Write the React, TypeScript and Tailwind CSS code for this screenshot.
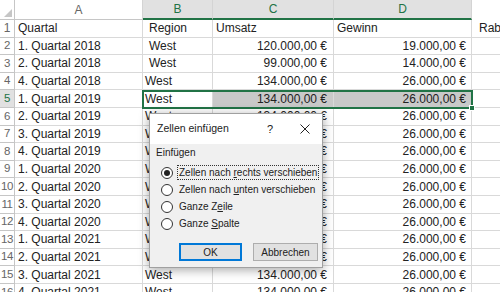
const quarters = [
  '1. Quartal 2018',
  '2. Quartal 2018',
  '4. Quartal 2018',
  '1. Quartal 2019',
  '2. Quartal 2019',
  '3. Quartal 2019',
  '4. Quartal 2019',
  '1. Quartal 2020',
  '2. Quartal 2020',
  '3. Quartal 2020',
  '4. Quartal 2020',
  '1. Quartal 2021',
  '2. Quartal 2021',
  '3. Quartal 2021',
  '4. Quartal 2021',
];

const umsatz = (i: number) => (i === 0 ? '120.000,00 €' : i === 1 ? '99.000,00 €' : '134.000,00 €');
const gewinn = (i: number) => (i === 0 ? '19.000,00 €' : i === 1 ? '14.000,00 €' : '26.000,00 €');

function ColHead({ label, w, active }: { label: string; w: string; active?: boolean }) {
  return (
    <div
      className={`${w} shrink-0 h-full flex items-center justify-center border-r border-[#d4d4d4] ${
        active
          ? 'bg-[#e1e1e1] text-[#217346] border-b-2 border-b-[#217346]'
          : 'text-[#666] border-b border-b-[#c6c6c6]'
      }`}
    >
      {label}
    </div>
  );
}

function Radio({ checked, children, focus }: { checked?: boolean; children: React.ReactNode; focus?: boolean }) {
  return (
    <div className="h-[17px] flex items-center pl-[11px]">
      <span className="w-[12px] h-[12px] rounded-full border border-[#333] bg-white flex items-center justify-center">
        {checked && <span className="w-[6px] h-[6px] rounded-full bg-[#222]" />}
      </span>
      <span
        className={`ml-[5px] px-[1px] leading-[13px] ${focus ? 'outline outline-1 outline-dotted outline-[#333]' : ''}`}
      >
        {children}
      </span>
    </div>
  );
}

function Dialog() {
  return (
    <div className="absolute left-[149px] top-[113px] w-[174px] h-[155px] border border-[#a0a0a0] bg-[#f0f0f0] shadow-[0_2px_10px_rgba(0,0,0,0.35)] text-[10px] text-[#222] flex flex-col">
      <div className="h-[30px] bg-white flex items-center pl-[7px] text-[10.5px] shrink-0">
        <span className="flex-1">Zellen einfügen</span>
        <span className="w-[20px] text-center text-[11px] mr-[20px]">?</span>
        <svg width="10" height="10" viewBox="0 0 10 10" className="mr-[12px]">
          <path d="M0.5 0.5 L9.5 9.5 M9.5 0.5 L0.5 9.5" stroke="#222" strokeWidth="1" />
        </svg>
      </div>
      <div className="pt-[2px] pl-[6px] leading-[14px]">Einfügen</div>
      <div className="mt-[4px] flex flex-col">
        <Radio checked focus>
          Zellen nach <u>r</u>echts verschieben
        </Radio>
        <Radio>
          Zellen nach <u>u</u>nten verschieben
        </Radio>
        <Radio>
          Ganze Z<u>e</u>ile
        </Radio>
        <Radio>
          Ganze <u>S</u>palte
        </Radio>
      </div>
      <div className="mt-[11px] flex justify-end gap-[11px] pr-[4px]">
        <div className="w-[63px] h-[18px] border-2 border-[#0078d7] bg-[#e1e1e1] flex items-center justify-center">OK</div>
        <div className="w-[65px] h-[18px] border border-[#adadad] bg-[#e1e1e1] flex items-center justify-center">Abbrechen</div>
      </div>
    </div>
  );
}

export default function App() {
  return (
    <div className="relative w-[500px] h-[292px] overflow-hidden bg-white font-['Liberation_Sans',Arial,sans-serif] text-[12px] text-[#222]">
      {/* column headers */}
      <div className="flex h-[20px]">
        <div className="w-[15px] shrink-0 h-full border-r border-b border-[#c6c6c6] flex items-end justify-end p-[2px]">
          <svg width="8" height="8" viewBox="0 0 8 8">
            <path d="M8 0 L8 8 L0 8 Z" fill="#c6c6c6" />
          </svg>
        </div>
        <ColHead label="A" w="w-[128px]" />
        <ColHead label="B" w="w-[70px]" active />
        <ColHead label="C" w="w-[121px]" active />
        <ColHead label="D" w="w-[138px]" active />
        <div className="flex-1 h-full" />
      </div>

      {/* row 1 */}
      <div className="flex h-[17.6px]">
        <div className="w-[15px] shrink-0 border-r border-b border-[#c6c6c6] text-[#666] flex items-center justify-center">1</div>
        <div className="w-[128px] shrink-0 border-r border-b border-[#d9d9d9] flex items-center pl-[3px]">Quartal</div>
        <div className="w-[70px] shrink-0 border-r border-b border-[#d9d9d9] flex items-center pl-[6px]">Region</div>
        <div className="w-[121px] shrink-0 border-r border-b border-[#d9d9d9] flex items-center pl-[3px]">Umsatz</div>
        <div className="w-[138px] shrink-0 border-r border-b border-[#d9d9d9] flex items-center pl-[3px]">Gewinn</div>
        <div className="flex-1 border-b border-[#d9d9d9] flex items-center pl-[7px] whitespace-nowrap">Rabatt</div>
      </div>

      {quarters.map((q, i) => {
        const selected = i === 3;
        return (
          <div key={q} className="flex h-[17.6px]">
            <div
              className={`w-[15px] shrink-0 border-r border-b border-[#c6c6c6] flex items-center justify-center text-[11.5px] tracking-[-0.5px] ${
                selected ? 'bg-[#e1e1e1] text-[#217346]' : 'text-[#666]'
              }`}
            >
              {i + 2}
            </div>
            <div className="w-[128px] shrink-0 border-r border-b border-[#d9d9d9] flex items-center pl-[3px]">{q}</div>
            <div
              className={`w-[70px] shrink-0 border-r border-b border-[#d9d9d9] flex items-center ${
                i < 2 ? 'pl-[6px]' : 'pl-[2px]'
              }`}
            >
              West
            </div>
            <div
              className={`w-[121px] shrink-0 border-r border-b border-[#d9d9d9] flex items-center justify-end pr-[6px] ${
                selected ? 'bg-[#c9c9c9]' : ''
              }`}
            >
              {umsatz(i)}
            </div>
            <div
              className={`w-[138px] shrink-0 border-r border-b border-[#d9d9d9] flex items-center justify-end pr-[5px] ${
                selected ? 'bg-[#c9c9c9]' : ''
              }`}
            >
              {gewinn(i)}
            </div>
            <div className="flex-1 border-b border-[#d9d9d9]" />
          </div>
        );
      })}

      {/* selection B5:D5 */}
      <div className="absolute left-[142px] top-[89.5px] w-[331px] h-[19.5px] border-2 border-[#217346] pointer-events-none">
        <div className="absolute -right-[4px] -bottom-[4px] w-[6px] h-[6px] bg-[#217346] border border-white" />
      </div>

      <Dialog />
    </div>
  );
}
